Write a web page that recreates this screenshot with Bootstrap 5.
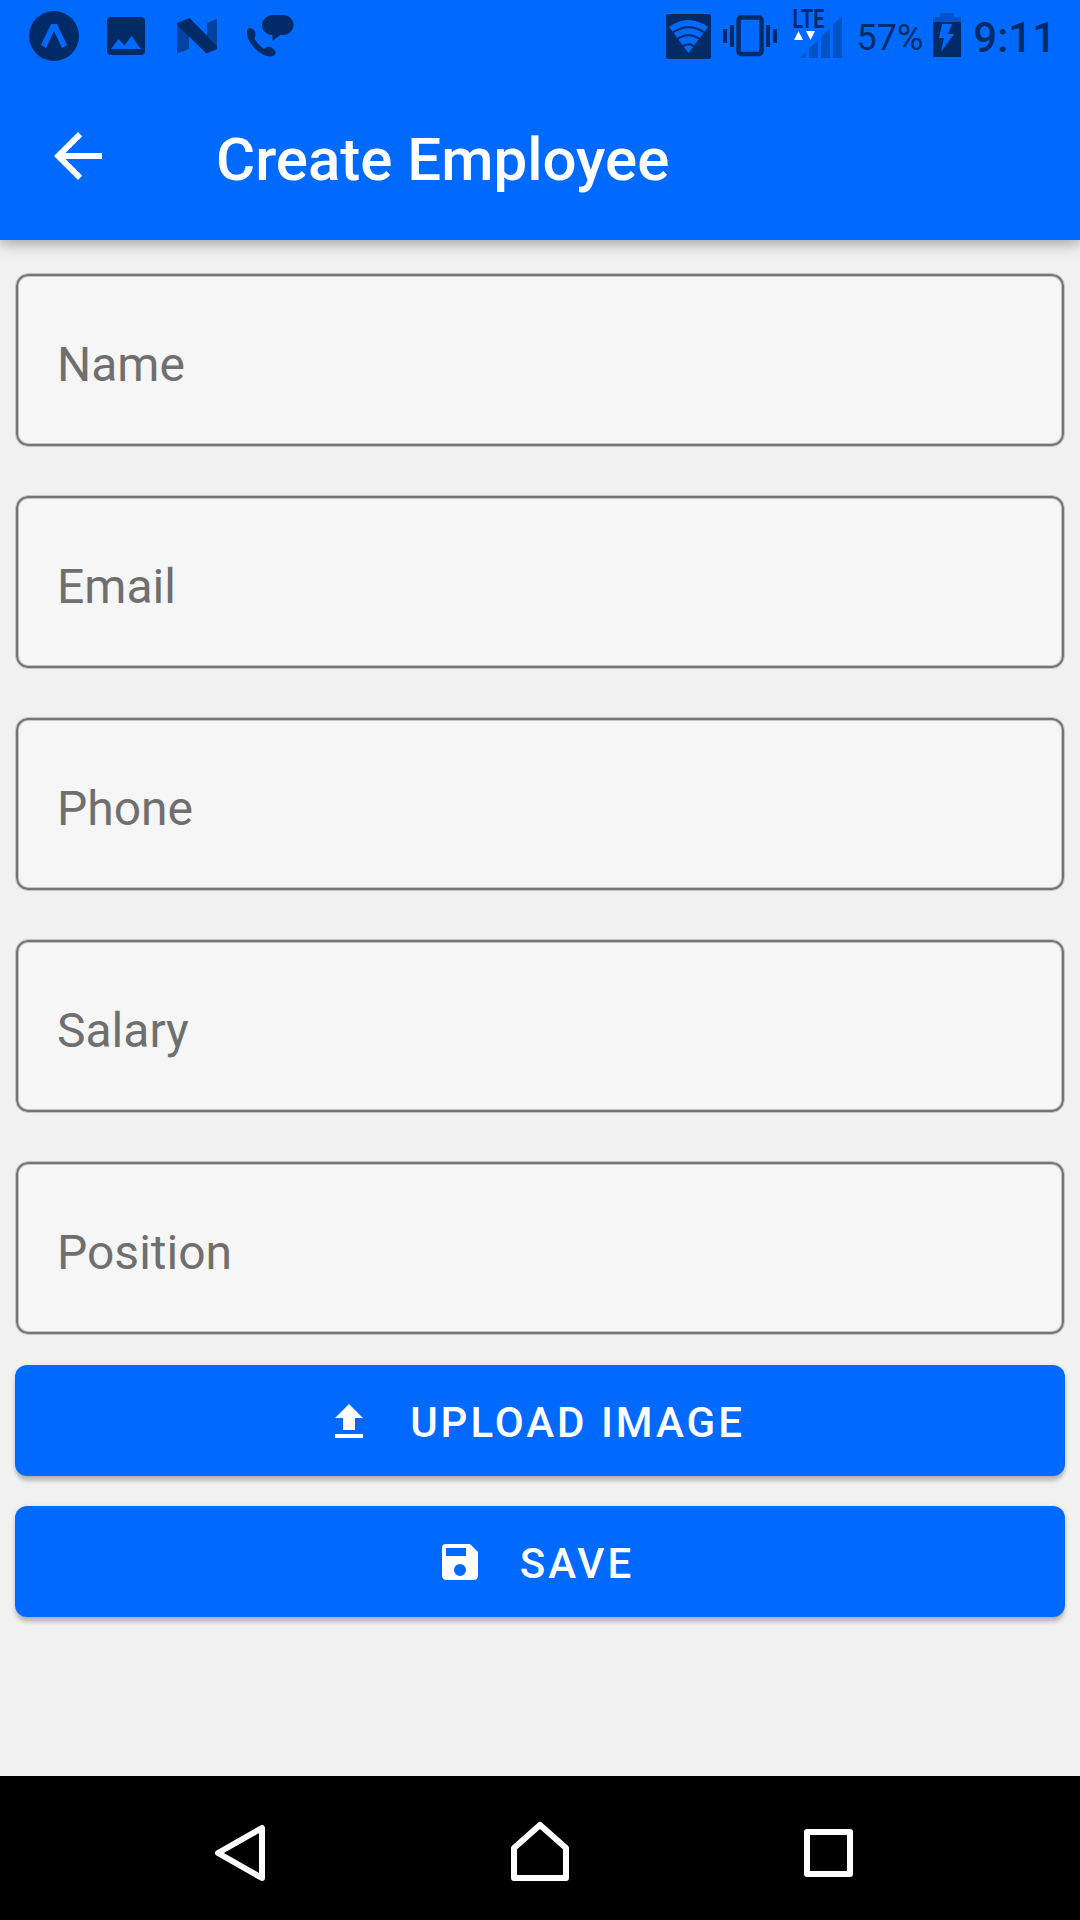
<!DOCTYPE html>
<html lang="en">
<head>
<meta charset="utf-8">
<meta name="viewport" content="width=device-width, initial-scale=1">
<title>Create Employee</title>
<link href="https://cdn.jsdelivr.net/npm/bootstrap@5.3.0/dist/css/bootstrap.min.css" rel="stylesheet">
<style>
:root{--blue:#006aff;--ink:#002b66}
body{font-family:Roboto,sans-serif;background:#f1f1f1;height:1920px;overflow:hidden}
svg{display:block;flex:none}
.statusbar{height:72px;background:var(--blue);color:var(--ink);padding:0 24px 0 29px;position:relative;z-index:1}
.lefticons{gap:28px}
.nougat{margin-left:2px}
.percent{font-size:36px;line-height:72px;padding-top:2px}
.battery{margin:0 12px 0 10px}
.clock{font-size:42px;font-weight:500;line-height:72px;padding-top:2px}
.appbar{height:168px;background:var(--blue);color:#fff;padding:0 54px;box-shadow:0 3px 14px rgba(0,0,0,.36)}
.appbar h1{font-size:60px;font-weight:500;line-height:80px;margin:8px 0 0 114px}
.form-area{padding:33px 15px 0}
.fields{gap:48px}
.form-control.field{height:174px;border:1px solid #c4c4c4;box-shadow:inset 0 0 0 2px #747474,inset 0 0 0 3px #c4c4c4;border-radius:13px;background:#f6f6f6;padding:8px 41px 0;font-size:48px;color:#333}
.field::placeholder{color:#6f6f6f;opacity:1}
.actions{gap:30px;margin-top:30px}
.btn.action{--bs-btn-bg:var(--blue);--bs-btn-color:#fff;--bs-btn-hover-bg:#005ce0;--bs-btn-hover-color:#fff;height:111px;border:0;border-radius:12px;padding:0;font-size:42px;font-weight:500;letter-spacing:3px;box-shadow:0 6px 4px -1px rgba(0,0,0,.2),0 1px 5px rgba(0,0,0,.12)}
.action span{padding-top:3px}
.upload-icon{margin-right:47px}
.save-icon{margin-right:42px}
.save-btn{padding-right:4px!important}
.navkeys{height:144px;background:#000}
</style>
</head>
<body class="d-flex flex-column">
<div class="statusbar d-flex justify-content-between">
  <div class="lefticons d-flex">
    <svg width="50" height="72" viewBox="29 0 50 72"><circle cx="54" cy="36" r="25" fill="#002b66"/><path d="M51 24h6l10 21-5 3-8-17-8 17-5-3z" fill="#006aff"/></svg>
    <svg width="38" height="72" viewBox="107 0 38 72"><rect x="107" y="17" width="38" height="38" rx="4" fill="#002b66"/><path d="M111 49l7.500-10 6 6.500 7-9.500 9.500 13z" fill="#006aff"/></svg>
    <svg class="nougat" width="42" height="72" viewBox="175 0 42 72"><path d="M177 23l12 13v13l-12 4.500zM207 23l12-5v30l-12-12z" fill="#00429f"/><path d="M177 23l12.500-5L219 48l-12.500 5.500L177 25z" fill="#002b66"/></svg>
    <svg width="48" height="72" viewBox="245 0 48 72" overflow="visible"><path d="M273 15h10c6 0 10.500 4.500 10.500 10s-4.500 10-10.500 10h-3l-7.500 6v-6c-6 0-10.500-4.500-10.500-10s5-10 11-10z" fill="#002b66"/><path d="M250 28l3 1c4 3.500 2 8 1.500 10 2 3.500 5.500 7 9.500 10 2.500-2 5-3 7.500-1.500l4 3.500c.8 3-1.500 5.500-6 5.500-11-1-22.500-14.500-22.700-24 0-3 1-4.500 3.200-4.500z" fill="#002b66"/></svg>
  </div>
  <div class="d-flex">
    <svg width="190" height="72" viewBox="666 0 190 72">
      <rect x="666" y="14" width="45" height="45" rx="2" fill="#002b66"/>
      <path d="M669 27q19.500-14 39 0L688.500 53z" fill="#006aff"/>
      <g fill="none" stroke="#002b66" stroke-width="1.800"><path d="M672 33q16.500-11.500 33 0M676.500 39.500q12-8.500 24 0M682.500 46.500q6-4.500 12 0"/></g>
      <rect x="738.500" y="17.500" width="23" height="36.500" rx="2.500" fill="none" stroke="#002b66" stroke-width="4.500"/>
      <path d="M723 29h4v14h-4zM730 25h4v22h-4zM766 25h4v22h-4zM773 29h4v14h-4z" fill="#002b66"/>
      <text x="792.500" y="28" font-family="Roboto" font-size="25" font-weight="700" textLength="32" lengthAdjust="spacingAndGlyphs" fill="#002b66">LTE</text>
      <path d="M794 40l4.500-9 4.500 9zM806 31h9l-4.500 9z" fill="#fff"/>
      <path d="M800 58l6-6v6zM809 49l9-9v18h-9zM821 37l9-9v30h-9zM833 25l9-9v42h-9z" fill="#0053c4"/>
    </svg>
    <span class="percent">57%</span>
    <svg class="battery" width="28" height="72" viewBox="932 0 28 72"><path d="M939 13h14v4h7v5h-28v-5h7z" fill="#0053c4"/><path d="M932 22h28v35h-28z" fill="#002b66"/><path d="M941 24h10l-4 10h6l-13 18 3-14h-5z" fill="#006aff"/></svg>
    <span class="clock">9:11</span>
  </div>
</div>
<header class="appbar d-flex align-items-center">
  <svg width="48" height="48" viewBox="4 4 16 16"><path fill="#fff" d="M20 11H7.830l5.590-5.590L12 4l-8 8 8 8 1.410-1.410L7.830 13H20z"/></svg>
  <h1>Create Employee</h1>
</header>
<main class="form-area flex-grow-1">
  <form>
    <div class="fields d-flex flex-column">
      <input class="form-control field" placeholder="Name" aria-label="Name">
      <input class="form-control field" placeholder="Email" aria-label="Email">
      <input class="form-control field" placeholder="Phone" aria-label="Phone">
      <input class="form-control field" placeholder="Salary" aria-label="Salary">
      <input class="form-control field" placeholder="Position" aria-label="Position">
    </div>
    <div class="actions d-flex flex-column">
      <button type="button" class="btn action d-flex align-items-center justify-content-center"><svg class="upload-icon" width="28" height="34" viewBox="5 3 14 17"><path fill="#fff" d="M9 16h6v-6h4l-7-7-7 7h4zM5 18h14v2H5z"/></svg><span>UPLOAD IMAGE</span></button>
      <button type="button" class="btn action save-btn d-flex align-items-center justify-content-center"><svg class="save-icon" width="36" height="36" viewBox="3 3 18 18"><path fill="#fff" d="M17 3H5a2 2 0 0 0-2 2v14c0 1.100.9 2 2 2h14c1.100 0 2-.9 2-2V7zm-5 16a3 3 0 1 1 0-6 3 3 0 0 1 0 6zm3-10H5V5h10z"/></svg><span>SAVE</span></button>
    </div>
  </form>
</main>
<nav class="navkeys">
  <svg width="1080" height="144" viewBox="0 1776 1080 144" fill="none" stroke="#fff" stroke-width="6" stroke-linejoin="round"><path d="M262 1828v50l-44-25zM540 1825l-26 23v30h52v-30z"/><path d="M807 1832h43v42h-43z"/></svg>
</nav>
<script src="https://cdn.jsdelivr.net/npm/bootstrap@5.3.0/dist/js/bootstrap.bundle.min.js"></script>
</body>
</html>
